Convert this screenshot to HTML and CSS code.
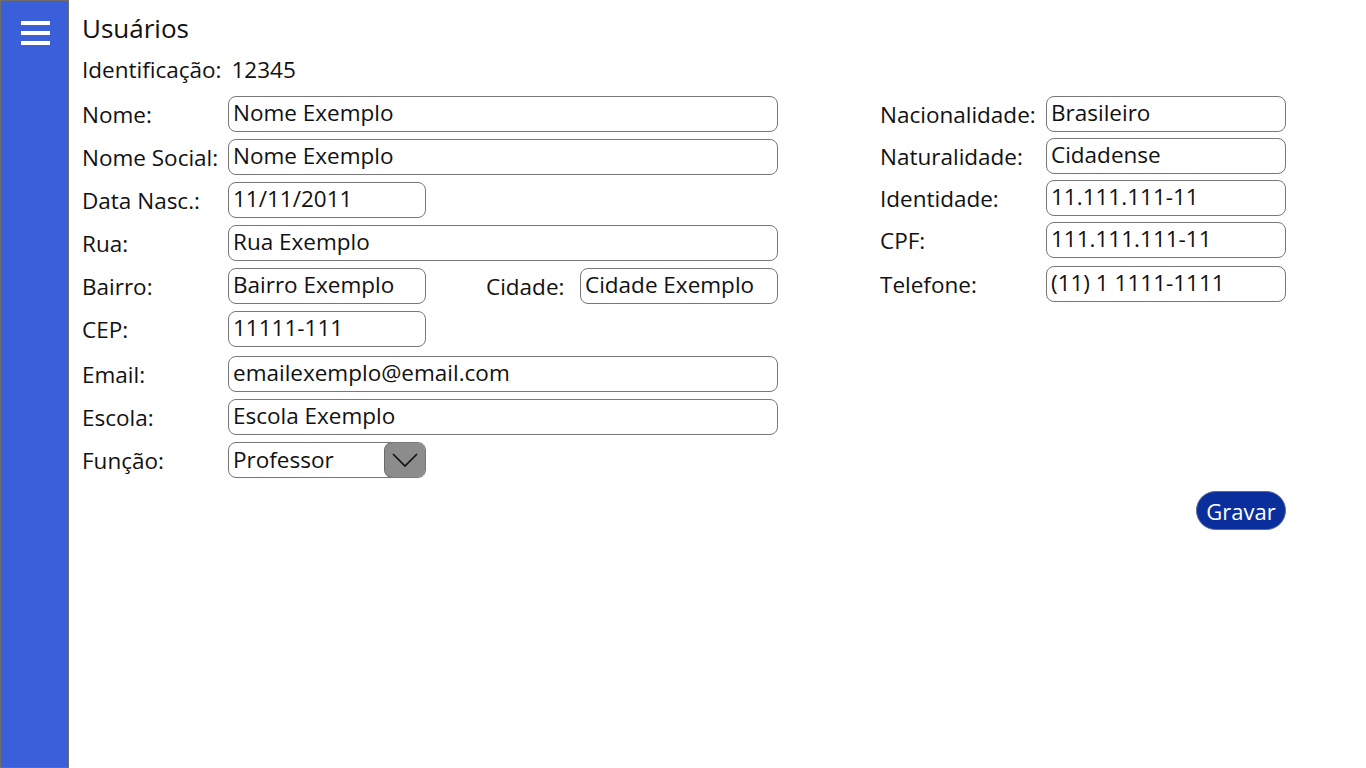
FILE: index.html
```html
<!DOCTYPE html>
<html lang="pt-BR">
<head>
<meta charset="utf-8">
<title>Usuários</title>
<link rel="stylesheet" href="styles.css">
</head>
<body>
<div class="app">
  <aside class="sidebar">
    <button class="menu-btn" aria-label="Menu">
      <svg width="29" height="25" viewBox="0 0 29 25"><rect x="0" y="0" width="29" height="4" fill="#fff"/><rect x="0" y="10" width="29" height="4" fill="#fff"/><rect x="0" y="20" width="29" height="4" fill="#fff"/></svg>
    </button>
  </aside>
  <main class="content">
    <h1 class="title">Usuários</h1>
    <div class="ident"><span>Identificação:</span><span>12345</span></div>
    <div class="form">
      <div class="col-left">
        <div class="row"><label>Nome:</label><div class="field wide">Nome Exemplo</div></div>
        <div class="row"><label>Nome Social:</label><div class="field wide">Nome Exemplo</div></div>
        <div class="row"><label>Data Nasc.:</label><div class="field short">11/11/2011</div></div>
        <div class="row"><label>Rua:</label><div class="field wide">Rua Exemplo</div></div>
        <div class="row"><label>Bairro:</label><div class="field short">Bairro Exemplo</div><label class="inline">Cidade:</label><div class="field short push">Cidade Exemplo</div></div>
        <div class="row"><label>CEP:</label><div class="field short">11111-111</div></div>
        <div class="row gap-top"><label>Email:</label><div class="field wide">emailexemplo@email.com</div></div>
        <div class="row"><label>Escola:</label><div class="field wide">Escola Exemplo</div></div>
        <div class="row"><label>Função:</label>
          <div class="field short select"><span>Professor</span>
            <span class="select-btn"><svg width="30" height="20" viewBox="0 0 30 20"><path d="M3 4 L15 16 L27 4" fill="none" stroke="#111" stroke-width="1.6"/></svg></span>
          </div>
        </div>
      </div>
      <div class="col-right">
        <div class="row"><label>Nacionalidade:</label><div class="field">Brasileiro</div></div>
        <div class="row"><label>Naturalidade:</label><div class="field">Cidadense</div></div>
        <div class="row"><label>Identidade:</label><div class="field">11.111.111-11</div></div>
        <div class="row"><label>CPF:</label><div class="field">111.111.111-11</div></div>
        <div class="row gap-top"><label>Telefone:</label><div class="field">(11) 1 1111-1111</div></div>
      </div>
    </div>
    <div class="actions"><button class="save">Gravar</button></div>
  </main>
</div>
</body>
</html>
```
FILE: styles.css
```css
* { box-sizing: border-box; }
html, body { margin: 0; padding: 0; background: #fff; }
body {
  font-family: "Open Sans", "Noto Sans", sans-serif;
  color: #111;
  font-size: 22.5px;
}
.app { display: flex; height: 768px; }
.sidebar {
  width: 69px;
  height: 768px;
  background: #3a5fd8;
  border: 1px solid #6d6d6d;
  flex: none;
}
.menu-btn {
  background: none; border: none; padding: 0;
  margin: 20px 0 0 20px;
  display: block;
}
.content { flex: 1; padding: 8px 0 0 13px; }
.title { font-size: 26px; font-weight: 400; margin: 0; line-height: 40px; }
.ident { display: flex; gap: 10px; line-height: 30px; margin-top: 7px; }
.form { display: flex; margin-top: 11px; }
.col-left { width: 798px; display: flex; flex-direction: column; gap: 7px; }
.col-right { display: flex; flex-direction: column; gap: 6px; }
.row { display: flex; align-items: center; height: 36px; }
.col-left .row { width: 696px; }
.row.gap-top { margin-top: 2px; }
.col-left label { width: 146px; flex: none; white-space: nowrap; }
.col-right label { width: 166px; flex: none; white-space: nowrap; }
.col-left label.inline { width: auto; margin-left: 60px; }
.field {
  height: 36px;
  border: 1px solid #777;
  border-radius: 8px;
  padding: 0 4px;
  line-height: 32px;
  white-space: nowrap;
  overflow: hidden;
  width: 240px;
  flex: none;
}
.field.wide { width: 550px; }
.field.short { width: 198px; }
.field.push { margin-left: auto; }
.select { display: flex; justify-content: space-between; align-items: center; padding-right: 0; }
.select-btn {
  width: 42px; height: 36px;
  margin: -1px -1px -1px 0;
  background: #8c8c8c;
  border: 1px solid #6a6a6a;
  border-radius: 8px;
  display: flex; align-items: center; justify-content: center;
}
.actions { width: 1204px; display: flex; justify-content: flex-end; margin-top: 13px; }
.save {
  font-family: inherit;
  font-size: 22px;
  color: #fff;
  background: #0b2e9d;
  border: 1px solid #5a6a9a;
  border-radius: 20px;
  height: 39px;
  width: 90px;
  padding: 0;
}
```
